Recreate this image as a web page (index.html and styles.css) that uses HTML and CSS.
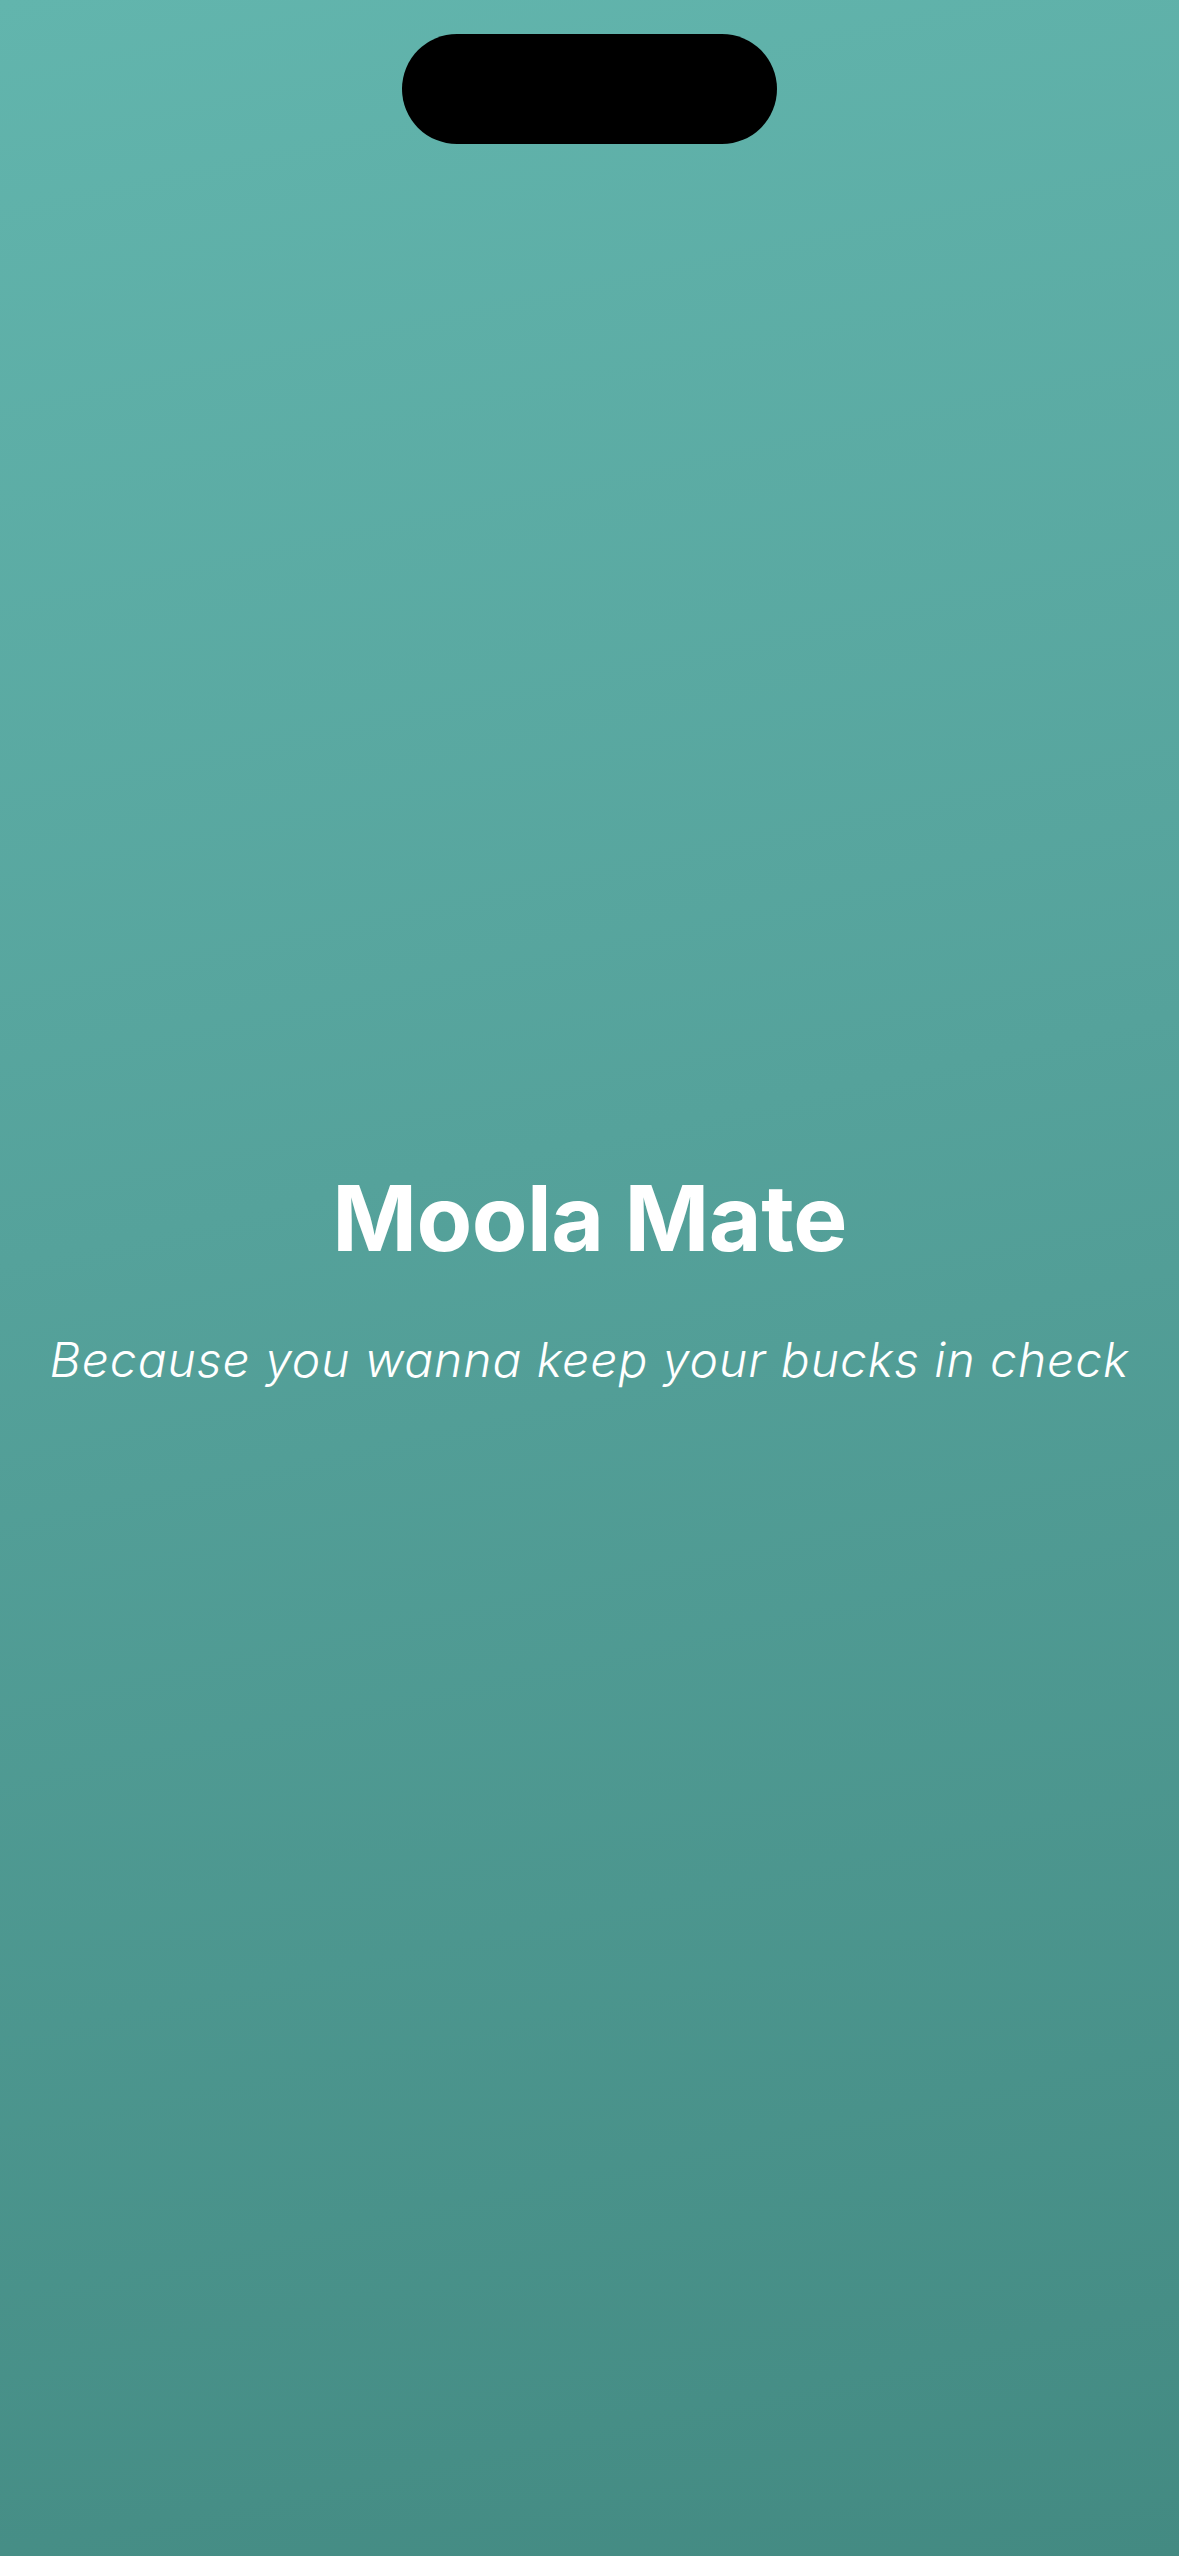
FILE: index.html
```html
<!DOCTYPE html>
<html lang="en">
<head>
<meta charset="utf-8">
<title>Moola Mate</title>
<link rel="stylesheet" href="styles.css">
</head>
<body>
<div class="screen">
  <div class="island"></div>
  <main class="splash">
    <h1 class="title">Moola Mate</h1>
    <p class="tagline">Because you wanna keep your bucks in check</p>
  </main>
</div>
</body>
</html>
```
FILE: styles.css
```css
html, body {
  margin: 0;
  padding: 0;
}
body {
  width: 1179px;
  height: 2556px;
  overflow: hidden;
  font-family: "Inter", "Roboto", sans-serif;
}
.screen {
  position: relative;
  width: 1179px;
  height: 2556px;
  background: linear-gradient(168deg, #62b5ad 0%, #55a29b 45%, #438a82 100%);
  display: flex;
  align-items: center;
  justify-content: center;
}
.island {
  position: absolute;
  top: 34px;
  left: 402px;
  width: 375px;
  height: 110px;
  border-radius: 55px;
  background: #000;
}
.splash {
  display: flex;
  flex-direction: column;
  align-items: center;
  gap: 58px;
  padding-bottom: 4px;
  color: #fff;
}
.title {
  margin: 0;
  font-size: 91px;
  line-height: 110px;
  font-weight: 700;
  letter-spacing: -0.5px;
}
.tagline {
  margin: 0;
  font-size: 48px;
  line-height: 58px;
  font-weight: 300;
  font-style: italic;
  letter-spacing: 0.95px;
}
```
